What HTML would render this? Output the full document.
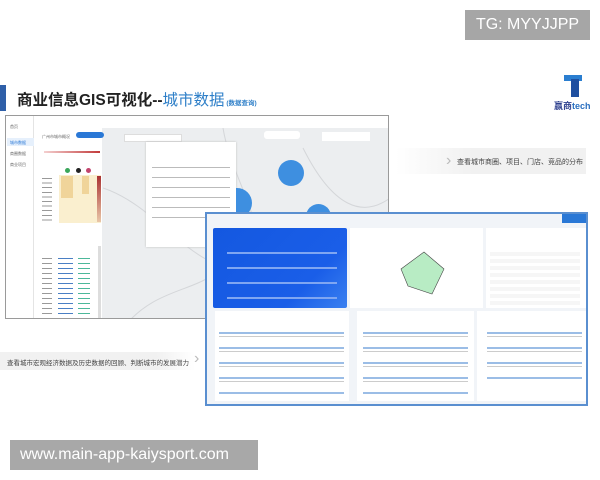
<!DOCTYPE html><html><head><meta charset="utf-8"><style>
*{margin:0;padding:0;box-sizing:border-box}
body{width:600px;height:480px;background:#fff;position:relative;overflow:hidden;font-family:"Liberation Sans","Noto Sans CJK SC",sans-serif}
.a{position:absolute}
.t{font-size:4px;color:#666;white-space:nowrap}
</style></head><body>
<div class="a" style="left:465px;top:10px;width:125px;height:30px;background:#a6a6a6;color:#fff;font-size:16px;line-height:30px;text-align:center">TG: MYYJJPP</div>
<div class="a" style="left:0;top:85px;width:6px;height:26px;background:#2f5fa8"></div>
<div class="a" style="left:17px;top:88px;font-size:15.5px;font-weight:bold;color:#222;white-space:nowrap">商业信息GIS可视化--<span style="color:#2e7fc8;font-weight:normal">城市数据</span><span style="font-size:6.5px;color:#2e7fc8;font-weight:bold"> (数据查询)</span></div>
<div class="a" style="left:564px;top:75px;width:18px;height:6px;background:#2a7ed0"></div>
<div class="a" style="left:571px;top:79px;width:8px;height:18px;background:#1f4fa0"></div>
<div class="a" style="left:554px;top:99px;font-size:9px;font-weight:bold;color:#2d3f8e">赢商<span style="color:#2a6fc0">tech</span></div>
<!-- screenshot 1 -->
<div class="a" style="left:5px;top:115px;width:384px;height:204px;border:1px solid #9a9a9a;background:#eceef0;overflow:hidden">
 <div class="a" style="left:0;top:0;width:28px;height:204px;background:#fff;border-right:1px solid #e4e4e4"></div>
 <div class="a" style="left:1px;top:22px;width:27px;height:8px;background:#e6f0fc"></div>
 <div class="a t" style="left:4px;top:8px">首页</div><div class="a t" style="left:4px;top:24px;color:#2a78d6">城市数据</div><div class="a t" style="left:4px;top:35px">商圈数据</div><div class="a t" style="left:4px;top:46px">商业项目</div>
 <div class="a" style="left:28px;top:0;width:360px;height:12px;background:#fff"></div>
 <div class="a" style="left:28px;top:12px;width:68px;height:192px;background:#fff"></div>
 <div class="a t" style="left:36px;top:18px">广州市城市概况</div>
 <div class="a" style="left:70px;top:16px;width:28px;height:6px;border-radius:3px;background:#2a78d6"></div>
 <div class="a" style="left:38px;top:35px;width:56px;height:2px;background:linear-gradient(90deg,#f4d0d0,#c23a3a)"></div>
 <div class="a" style="left:59px;top:52px;width:5px;height:5px;border-radius:50%;background:#3aa65a"></div>
 <div class="a" style="left:70px;top:52px;width:5px;height:5px;border-radius:50%;background:#222"></div>
 <div class="a" style="left:80px;top:52px;width:5px;height:5px;border-radius:50%;background:#c2456e"></div>
 <div class="a" style="left:53px;top:59px;width:42px;height:48px;background:#faefcf"></div>
 <div class="a" style="left:55px;top:60px;width:12px;height:22px;background:#f0d49a"></div>
 <div class="a" style="left:76px;top:60px;width:7px;height:18px;background:#f0d49a"></div>
 <div class="a" style="left:91px;top:60px;width:4px;height:46px;background:linear-gradient(#a33,#e9c7a8)"></div>
 <div class="a" style="left:36px;top:60px;width:10px;height:46px;background:repeating-linear-gradient(#fff 0 2px,#999 2px 3px,#fff 3px 4.6px)"></div>
 <div class="a" style="left:92px;top:130px;width:3px;height:75px;background:#ddd"></div>
 <div class="a" style="left:52px;top:140px;width:15px;height:60px;background:repeating-linear-gradient(#fff 0 2px,#4a7fc4 2px 3px,#fff 3px 5px)"></div>
 <div class="a" style="left:72px;top:140px;width:12px;height:60px;background:repeating-linear-gradient(#fff 0 2px,#4cb89a 2px 3px,#fff 3px 5px)"></div>
 <div class="a" style="left:36px;top:140px;width:10px;height:60px;background:repeating-linear-gradient(#fff 0 2px,#999 2px 3px,#fff 3px 5px)"></div>
 <svg class="a" style="left:97px;top:12px" width="287" height="192"><g fill="none" stroke="#d4d6d9" stroke-width="1"><path d="M0 60 C60 80 90 150 150 140 S240 120 287 160"/><path d="M120 0 C130 60 170 90 160 204"/><path d="M200 20 C230 80 260 90 287 70"/><path d="M20 200 C60 150 110 170 130 120"/><path d="M240 204 C250 150 270 130 287 120"/></g></svg>
 <div class="a" style="left:316px;top:16px;width:48px;height:9px;background:#fff"></div>
 <div class="a" style="left:258px;top:15px;width:36px;height:8px;background:#fff;border-radius:3px"></div>
 <div class="a" style="left:118px;top:18px;width:58px;height:8px;background:#fff;border:1px solid #ddd"></div>
 <div class="a" style="left:140px;top:26px;width:90px;height:105px;background:#fff;box-shadow:0 0 2px #bbb"></div>
 <div class="a" style="left:146px;top:46px;width:78px;height:64px;background:repeating-linear-gradient(#fff 0 5px,#bbb 5px 6px,#fff 6px 10px)"></div>
 <div class="a" style="left:272px;top:44px;width:26px;height:26px;border-radius:50%;background:#3e8fe0"></div>
 <div class="a" style="left:230px;top:72px;width:16px;height:30px;border-radius:0 15px 15px 0;background:#3e8fe0"></div>
 <div class="a" style="left:300px;top:88px;width:25px;height:25px;border-radius:50%;background:#3e8fe0"></div>
</div>
<div class="a" style="left:396px;top:148px;width:190px;height:26px;background:linear-gradient(90deg,#fff,#f1f1f1 40%,#f1f1f1)"></div>
<div class="a" style="left:446px;top:152px;color:#bbb;font-size:16px">›</div>
<div class="a" style="left:457px;top:157px;font-size:7px;color:#444">查看城市商圈、项目、门店、竞品的分布</div>
<div class="a" style="left:0;top:352px;width:195px;height:18px;background:linear-gradient(90deg,#f1f1f1 80%,#fff)"></div>
<div class="a" style="left:7px;top:357px;font-size:6.5px;color:#444;white-space:nowrap">查看城市宏观经济数据及历史数据的回顾、判断城市的发展潜力</div>
<div class="a" style="left:194px;top:350px;color:#bbb;font-size:16px">›</div>
<!-- screenshot 2 -->
<div class="a" style="left:205px;top:212px;width:383px;height:194px;border:2px solid #5a8fd0;background:#f1f4f8;overflow:hidden">
 <div class="a" style="left:355px;top:0;width:28px;height:9px;background:#2a78d6"></div>
 <div class="a" style="left:6px;top:14px;width:134px;height:80px;background:linear-gradient(135deg,#1458e0,#1a5ee8 70%,#3a80f0);border-radius:2px"></div>
 <div class="a" style="left:20px;top:30px;width:110px;height:60px;background:repeating-linear-gradient(#0000 0 8px,#7fa6f2 8px 10px,#0000 10px 15px)"></div>
 <div class="a" style="left:143px;top:14px;width:133px;height:80px;background:#fff"></div>
 <svg class="a" style="left:185px;top:30px" width="60" height="60"><polygon points="32,8 52,25 40,50 16,42 9,25" fill="#b8ecc4" stroke="#444" stroke-width="0.6"/></svg>
 <div class="a" style="left:279px;top:14px;width:100px;height:80px;background:#fff"></div>
 <div class="a" style="left:283px;top:38px;width:90px;height:54px;background:repeating-linear-gradient(#f6f6f6 0 4px,#fff 4px 7px)"></div>
 <div class="a" style="left:8px;top:97px;width:134px;height:90px;background:#fff"></div>
 <div class="a" style="left:150px;top:97px;width:117px;height:90px;background:#fff"></div>
 <div class="a" style="left:270px;top:97px;width:110px;height:90px;background:#fff"></div>
 <div class="a" style="left:12px;top:115px;width:125px;height:65px;background:repeating-linear-gradient(#0000 0 3px,#9bbde6 3px 5px,#0000 5px 7px,#ccc 7px 8px,#0000 8px 15px)"></div>
 <div class="a" style="left:156px;top:115px;width:105px;height:65px;background:repeating-linear-gradient(#0000 0 3px,#9bbde6 3px 5px,#0000 5px 7px,#ccc 7px 8px,#0000 8px 15px)"></div>
 <div class="a" style="left:280px;top:115px;width:95px;height:50px;background:repeating-linear-gradient(#0000 0 3px,#9bbde6 3px 5px,#0000 5px 7px,#ccc 7px 8px,#0000 8px 15px)"></div>
</div>
<div class="a" style="left:10px;top:440px;width:248px;height:30px;background:#a8a8a8;color:#fff;font-size:16px;line-height:30px;padding-left:10px">www.main-app-kaiysport.com</div>
</body></html>
